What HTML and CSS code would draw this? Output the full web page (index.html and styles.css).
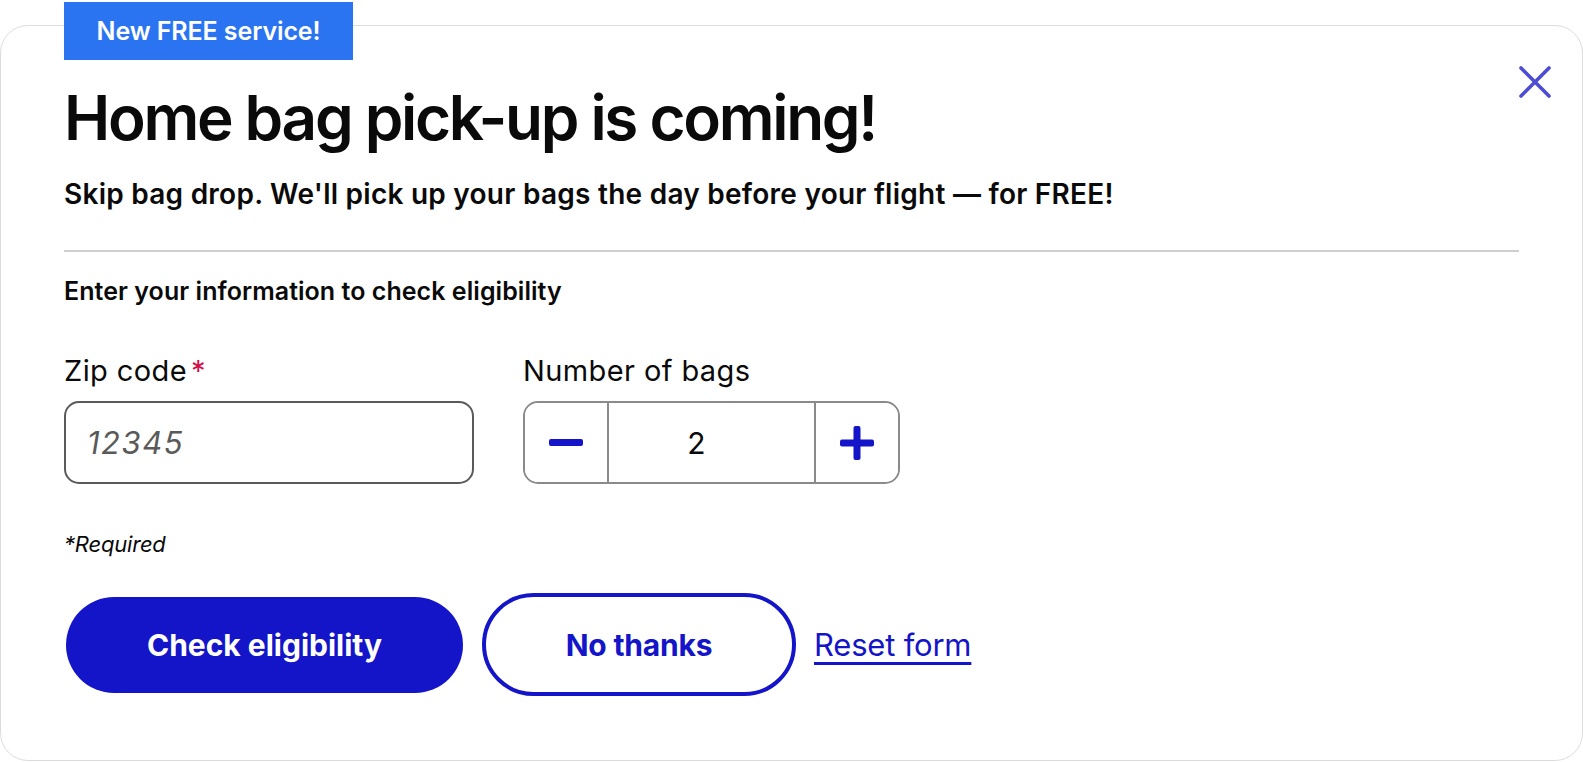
FILE: index.html
```html
<!DOCTYPE html>
<html lang="en">
<head>
<meta charset="utf-8">
<title>Home bag pick-up</title>
<link rel="stylesheet" href="styles.css">
</head>
<body>
<div class="modal">
  <div class="badge">New FREE service!</div>
  <button class="close" aria-label="Close">
    <svg width="32" height="32" viewBox="0 0 32 32"><path d="M2 2 L30 30 M30 2 L2 30" stroke="#4d4dd4" stroke-width="3.6" stroke-linecap="round" fill="none"/></svg>
  </button>
  <h1 class="title">Home bag pick-up is coming!</h1>
  <p class="subtitle">Skip bag drop. We'll pick up your bags the day before your flight — for FREE!</p>
  <hr class="divider">
  <p class="intro">Enter your information to check eligibility</p>
  <div class="fields">
    <div class="field">
      <label class="label">Zip code<span class="req">*</span></label>
      <div class="input"><span class="placeholder">12345</span></div>
    </div>
    <div class="field">
      <label class="label">Number of bags</label>
      <div class="stepper">
        <button class="step">
          <svg width="34" height="8" viewBox="0 0 34 8"><rect x="0" y="0" width="34" height="7" rx="2" fill="#1414c8"/></svg>
        </button>
        <div class="count">2</div>
        <button class="step">
          <svg width="34" height="34" viewBox="0 0 34 34"><rect x="0" y="13.5" width="34" height="7" rx="2" fill="#1414c8"/><rect x="13.5" y="0" width="7" height="34" rx="2" fill="#1414c8"/></svg>
        </button>
      </div>
    </div>
  </div>
  <p class="required">*Required</p>
  <div class="actions">
    <button class="btn primary">Check eligibility</button>
    <button class="btn secondary">No thanks</button>
    <a class="reset" href="#">Reset form</a>
  </div>
</div>
</body>
</html>
```
FILE: styles.css
```css
html, body {
  margin: 0;
  padding: 0;
  background: #ffffff;
}
body {
  font-family: Inter, "Noto Sans", sans-serif;
  color: #0a0a0a;
  padding-top: 25px;
}
.modal {
  position: relative;
  box-sizing: border-box;
  width: 1583px;
  height: 736px;
  border: 1px solid #dcdcdc;
  border-radius: 28px;
  background: #fff;
  padding: 55px 64px 0 63px;
}
.badge {
  position: absolute;
  top: -24px;
  left: 63px;
  width: 289px;
  height: 58px;
  box-sizing: border-box;
  background: #2b74f1;
  color: #fff;
  font-weight: 600;
  font-size: 25px;
  letter-spacing: -0.1px;
  display: flex;
  align-items: center;
  justify-content: center;
}
.close {
  position: absolute;
  top: 40px;
  right: 31px;
  background: none;
  border: 0;
  padding: 0;
  width: 32px;
  height: 32px;
  cursor: pointer;
}
.close svg { display: block; }
.title {
  margin: 0;
  font-size: 62px;
  font-weight: 600;
  line-height: 74px;
  letter-spacing: -2.3px;
}
.subtitle {
  margin: 22px 0 0;
  font-size: 28px;
  font-weight: 600;
  line-height: 34px;
  letter-spacing: 0.25px;
}
.divider {
  margin: 39px 0 0;
  border: 0;
  border-top: 2px solid #cfcfcf;
  width: 1455px;
}
.intro {
  margin: 24px 0 0;
  font-size: 25px;
  font-weight: 600;
  line-height: 30px;
  letter-spacing: 0.05px;
}
.fields {
  display: flex;
  gap: 49px;
  margin-top: 48px;
}
.field {
  display: flex;
  flex-direction: column;
}
.label {
  font-size: 29px;
  line-height: 34px;
  font-weight: 400;
  letter-spacing: 0.4px;
  margin-bottom: 13px;
}
.req {
  color: #d0104a;
  margin-left: 4px;
}
.input {
  box-sizing: border-box;
  width: 410px;
  height: 83px;
  border: 2px solid #5a5a5a;
  border-radius: 15px;
  display: flex;
  align-items: center;
  padding-left: 21px;
}
.placeholder {
  font-style: italic;
  color: #5a5a5a;
  font-size: 31px;
  letter-spacing: 1.5px;
}
.stepper {
  box-sizing: border-box;
  width: 377px;
  height: 83px;
  border: 2px solid #8a8a8a;
  border-radius: 15px;
  display: flex;
  overflow: hidden;
}
.step {
  width: 82px;
  background: #fff;
  border: 0;
  padding: 0;
  display: flex;
  align-items: center;
  justify-content: center;
  cursor: pointer;
}
.count {
  flex: 1;
  box-sizing: border-box;
  border-left: 2px solid #8a8a8a;
  border-right: 2px solid #8a8a8a;
  display: flex;
  align-items: center;
  justify-content: center;
  padding-right: 30px;
  font-size: 30px;
  color: #0a0a0a;
}
.required {
  margin: 46px 0 0;
  font-size: 22px;
  font-style: italic;
  line-height: 28px;
  letter-spacing: -0.2px;
}
.actions {
  display: flex;
  align-items: center;
  margin-top: 35px;
  margin-left: 2px;
}
.btn {
  font-family: Inter, "Noto Sans", sans-serif;
  font-weight: 700;
  font-size: 30px;
  letter-spacing: 0;
  border-radius: 999px;
  cursor: pointer;
  box-sizing: border-box;
}
.primary {
  width: 397px;
  height: 96px;
  background: #1414c8;
  color: #fff;
  border: 0;
}
.secondary {
  width: 314px;
  height: 103px;
  margin-left: 19px;
  background: #fff;
  color: #1414c8;
  border: 4px solid #1414c8;
  letter-spacing: -0.2px;
}
.reset {
  margin-left: 18px;
  font-size: 31px;
  color: #1414c8;
  text-decoration: underline;
  text-decoration-thickness: 2.5px;
  text-underline-offset: 6px;
  letter-spacing: -0.2px;
}
```
